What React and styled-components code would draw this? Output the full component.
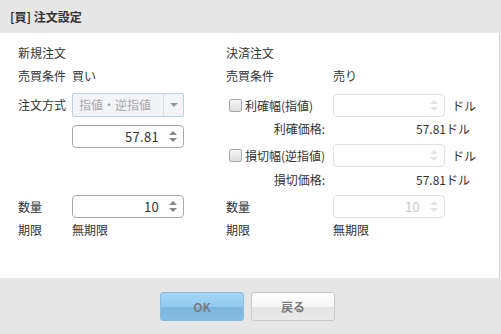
import React from 'react';
import styled, { createGlobalStyle } from 'styled-components';

const GlobalStyle = createGlobalStyle`
	html, body {
		margin: 0;
		padding: 0;
		background: #e6e6e6;
	}
	body {
		font-family: 'Noto Sans CJK JP', 'Noto Sans', sans-serif;
		font-size: 12px;
		color: #333;
	}
`;

const App = () => (
	<Dialog>
		<GlobalStyle />
		<Header>[買] 注文設定</Header>
		<Body>
			<Column>
				<Row h={20} top={0}>
					<span>新規注文</span>
				</Row>
				<Row h={20} top={3}>
					<Label w={54}>売買条件</Label>
					<span>買い</span>
				</Row>
				<Row h={24} top={7}>
					<Label w={54}>注文方式</Label>
					<Select>
						<span>指値・逆指値</span>
						<SelectArrow>
							<Tri down color="#999" />
						</SelectArrow>
					</Select>
				</Row>
				<Row h={23} top={8}>
					<Label w={54} />
					<Spinner value="57.81" />
				</Row>
				<Row h={23} top={47}>
					<Label w={54}>数量</Label>
					<Spinner value="10" />
				</Row>
				<Row h={20} top={2}>
					<Label w={54}>期限</Label>
					<span>無期限</span>
				</Row>
			</Column>
			<Column>
				<Row h={20} top={0}>
					<span>決済注文</span>
				</Row>
				<Row h={20} top={3}>
					<Label w={107}>売買条件</Label>
					<span>売り</span>
				</Row>
				<Row h={23} top={8}>
					<CheckLabel>
						<Check />
						利確幅(指値)
					</CheckLabel>
					<Spinner disabled />
					<Unit>ドル</Unit>
				</Row>
				<Row h={20} top={2}>
					<PriceLabel>利確価格:</PriceLabel>
					<PriceValue>57.81ドル</PriceValue>
				</Row>
				<Row h={23} top={5}>
					<CheckLabel>
						<Check />
						損切幅(逆指値)
					</CheckLabel>
					<Spinner disabled />
					<Unit>ドル</Unit>
				</Row>
				<Row h={20} top={3}>
					<PriceLabel>損切価格:</PriceLabel>
					<PriceValue>57.81ドル</PriceValue>
				</Row>
				<Row h={23} top={5}>
					<Label w={107}>数量</Label>
					<Spinner value="10" disabled />
				</Row>
				<Row h={20} top={2}>
					<Label w={107}>期限</Label>
					<span>無期限</span>
				</Row>
			</Column>
		</Body>
		<Footer>
			<Button primary>OK</Button>
			<Button>戻る</Button>
		</Footer>
	</Dialog>
);

const Spinner = ({ value, disabled }) => (
	<NumberBox disabled={disabled}>
		<NumberText>{value}</NumberText>
		<SpinButtons>
			<Tri color={disabled ? '#e2e2e2' : '#888'} />
			<Tri down color={disabled ? '#e2e2e2' : '#888'} />
		</SpinButtons>
	</NumberBox>
);

export default App;

const Dialog = styled.div`
	width: 501px;
	height: 334px;
	display: flex;
	flex-direction: column;
	background: #e6e6e6;
	overflow: hidden;
`;

const Header = styled.div`
	height: 33px;
	line-height: 33px;
	padding-left: 10px;
	font-weight: bold;
	font-size: 12px;
	color: #333;
	box-sizing: border-box;
`;

const Body = styled.div`
	height: 245px;
	width: 500px;
	box-sizing: border-box;
	background: #fff;
	border-right: 1px solid #d8d8d8;
	padding: 10px 0 0 18px;
	display: grid;
	grid-template-columns: 208px 1fr;
`;

const Column = styled.div`
	display: flex;
	flex-direction: column;
`;

const Row = styled.div`
	display: flex;
	align-items: center;
	height: ${(p) => p.h}px;
	margin-top: ${(p) => p.top}px;
	line-height: 20px;
	white-space: nowrap;
`;

const Label = styled.span`
	width: ${(p) => p.w}px;
	flex-shrink: 0;
`;

const CheckLabel = styled.label`
	width: 107px;
	flex-shrink: 0;
	display: flex;
	align-items: center;
	padding-left: 3px;
	box-sizing: border-box;
`;

const Check = styled.span`
	width: 11px;
	height: 11px;
	border: 1px solid #a9a9a9;
	border-radius: 2px;
	background: linear-gradient(#f4f4f4, #dedede);
	margin-right: 3px;
	flex-shrink: 0;
`;

const PriceLabel = styled.span`
	width: 107px;
	flex-shrink: 0;
	text-align: right;
	padding-right: 8px;
	box-sizing: border-box;
`;

const PriceValue = styled.span`
	width: 137px;
	text-align: right;
`;

const Unit = styled.span`
	margin-left: 7px;
`;

const Select = styled.div`
	width: 112px;
	height: 24px;
	box-sizing: border-box;
	border: 1px solid #bcd0e6;
	border-radius: 2px;
	background: #f2f4f7;
	color: #aaa;
	display: flex;
	align-items: center;
	padding-left: 6px;
	justify-content: space-between;
`;

const SelectArrow = styled.div`
	width: 19px;
	height: 22px;
	border-left: 1px solid #d6dde6;
	display: flex;
	align-items: center;
	justify-content: center;
`;

const NumberBox = styled.div`
	width: 112px;
	height: 23px;
	box-sizing: border-box;
	border: 1px solid ${(p) => (p.disabled ? '#e0e0e0' : '#a8a8a8')};
	border-radius: 4px;
	background: #fff;
	color: ${(p) => (p.disabled ? '#c8c8c8' : '#333')};
	display: flex;
	align-items: center;
	font-size: 13px;
`;

const NumberText = styled.span`
	flex: 1;
	text-align: right;
	padding-right: 6px;
	letter-spacing: 0.3px;
`;

const SpinButtons = styled.div`
	width: 16px;
	height: 21px;
	display: flex;
	flex-direction: column;
	align-items: center;
	justify-content: center;
	gap: 3px;
	margin-right: 2px;
`;

const Tri = styled.span`
	width: 0;
	height: 0;
	border-left: 4px solid transparent;
	border-right: 4px solid transparent;
	${(p) => (p.down ? `border-top: 4px solid ${p.color};` : `border-bottom: 4px solid ${p.color};`)}
`;

const Footer = styled.div`
	flex: 1;
	display: flex;
	justify-content: center;
	align-items: flex-start;
	gap: 7px;
	padding: 14px 6px 0 0;
`;

const Button = styled.button`
	width: 84px;
	height: 29px;
	box-sizing: border-box;
	border-radius: 3px;
	font-family: 'Noto Sans CJK JP', 'Noto Sans', sans-serif;
	font-size: 12px;
	font-weight: bold;
	color: #7b7b7b;
	padding: 0;
	border: 1px solid ${(p) => (p.primary ? '#8dbbd9' : '#c9c9c9')};
	background: ${(p) =>
		p.primary
			? 'linear-gradient(#a4d6f5 0%, #92caee 50%, #7cb6dd 52%, #84bde2 100%)'
			: 'linear-gradient(#ffffff 0%, #f6f6f6 50%, #e4e4e4 52%, #e9e9e9 100%)'};
`;
